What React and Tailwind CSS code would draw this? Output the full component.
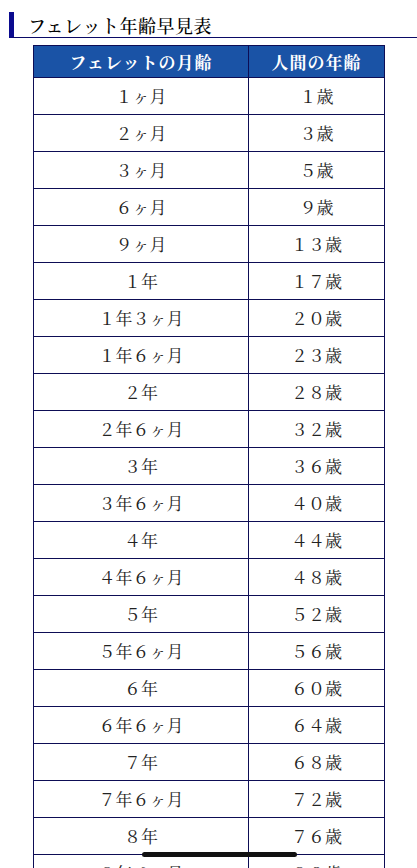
const rows = [
  ['１ヶ月', '１歳'],
  ['２ヶ月', '３歳'],
  ['３ヶ月', '５歳'],
  ['６ヶ月', '９歳'],
  ['９ヶ月', '１３歳'],
  ['１年', '１７歳'],
  ['１年３ヶ月', '２０歳'],
  ['１年６ヶ月', '２３歳'],
  ['２年', '２８歳'],
  ['２年６ヶ月', '３２歳'],
  ['３年', '３６歳'],
  ['３年６ヶ月', '４０歳'],
  ['４年', '４４歳'],
  ['４年６ヶ月', '４８歳'],
  ['５年', '５２歳'],
  ['５年６ヶ月', '５６歳'],
  ['６年', '６０歳'],
  ['６年６ヶ月', '６４歳'],
  ['７年', '６８歳'],
  ['７年６ヶ月', '７２歳'],
  ['８年', '７６歳'],
  ['８年６ヶ月', '８０歳'],
  ['９年', '８４歳'],
];

const font = { fontFamily: '"Noto Serif CJK JP", "Liberation Serif", "Noto Sans CJK JP", serif' };

export default function App() {
  return (
    <div className="w-[417px] min-h-[868px] bg-white text-[#222]" style={font}>
      {/* Section heading */}
      <div className="pt-[12px]">
        <div className="ml-[9px] h-[26px] border-l-[5px] border-b border-l-[#0b0b8f] border-b-[#0a0a66] pl-[14px] flex items-center">
          <h2 className="text-[18px] leading-none font-medium text-[#000] tracking-[0.5px]">フェレット年齢早見表</h2>
        </div>
      </div>

      {/* Age table */}
      <div className="mt-[7px] ml-[33px] w-[351px]">
        <table className="w-full table-fixed border-collapse">
          <colgroup>
            <col className="w-[215px]" />
            <col className="w-[136px]" />
          </colgroup>
          <thead>
            <tr className="h-[32px] bg-[#1a53a6] text-white">
              <th className="border border-[#0d0d55] text-[17px] font-bold tracking-[1px]">フェレットの月齢</th>
              <th className="border border-[#0d0d55] text-[17px] font-bold tracking-[1px]">人間の年齢</th>
            </tr>
          </thead>
          <tbody>
            {rows.map(([ferret, human], i) => (
              <tr key={i} className="h-[37px]">
                <td className="border border-[#0d0d55] text-center text-[17px] text-[#222]">{ferret}</td>
                <td className="border border-[#0d0d55] text-center text-[17px] text-[#222]">{human}</td>
              </tr>
            ))}
          </tbody>
        </table>
      </div>

      {/* Home indicator */}
      <div className="fixed left-[142px] top-[852px] w-[155px] h-[5px] rounded-full bg-[#111]" />
    </div>
  );
}
